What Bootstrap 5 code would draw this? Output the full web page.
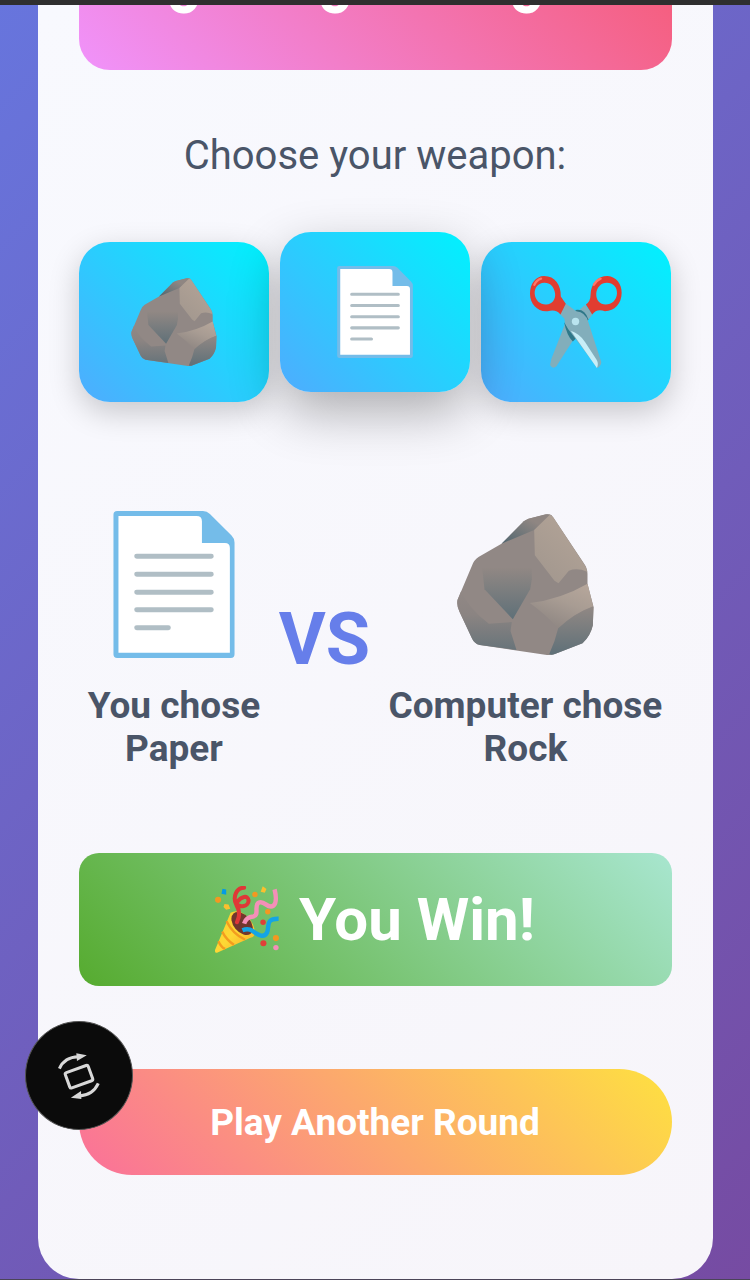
<!DOCTYPE html>
<html lang="en">
<head>
<meta charset="utf-8">
<meta name="viewport" content="width=device-width, initial-scale=1">
<title>Rock Paper Scissors</title>
<link rel="stylesheet" href="https://cdn.jsdelivr.net/npm/bootstrap@5.3.0/dist/css/bootstrap.min.css">
<style>
body { font-family: Roboto, "Liberation Sans", sans-serif; color: #4a5568; background: linear-gradient(135deg, #6775dd 0%, #764ba2 100%); min-height: 100vh; border-top: 5px solid #2f2f2f; border-bottom: 1px solid #4b4458; }
.game { margin: 0 5%; padding: 0 41px 104px; background: linear-gradient(135deg, #f8f9fe, #f7f5fa); border-radius: 0 0 41px 41px; }
.score { display: grid; grid-template-columns: 210fr 92fr 290fr; align-content: end; height: 65px; padding-bottom: 46px; overflow: hidden; border-radius: 0 0 31px 31px; background: linear-gradient(45deg, #f093fb, #f55f80); color: #fff; font-size: 64px; font-weight: 700; line-height: 64px; text-align: center; }
.prompt { font-size: 40px; line-height: 48px; font-weight: 400; margin: 62px 0; }
.weapons { display: grid; grid-template-columns: repeat(3, 1fr); gap: 11px; }
.weapon { height: 160px; border: 0; border-radius: 31px; background: linear-gradient(45deg, #4facfe, #00f2fe); box-shadow: 0 10px 31px rgba(0,0,0,.2); }
.weapon.chosen { transform: translateY(-10px); box-shadow: 0 20px 51px rgba(0,0,0,.3); z-index: 1; }
.duel { margin-top: 107px; font-size: 37px; line-height: 43px; font-weight: 700; }
.pick { height: 150px; margin-bottom: 25px; }
.versus { color: #667eea; font-size: 72px; line-height: 84px; }
.outcome { margin-top: 83px; padding: 31px 0; border-radius: 20px; background: linear-gradient(45deg, #56ab2f, #a8e6cf); color: #fff; font-size: 60px; line-height: 71px; font-weight: 700; gap: 19px; }
.again { margin-top: 83px; height: 106px; border: 0; border-radius: 53px; background: linear-gradient(45deg, #fa709a, #fee140); color: #fff; font-size: 37px; line-height: 43px; font-weight: 700; }
.rotate { left: 25px; bottom: 150px; width: 108px; height: 109px; border: 1px solid #555; background: #0b0b0b; z-index: 5; }
</style>
</head>
<body>
<svg width="0" height="0" class="position-absolute" aria-hidden="true">
  <defs>
    <linearGradient id="face" x1="0" y1="0" x2="0" y2="1"><stop offset="0" stop-color="#918884"/><stop offset="1" stop-color="#5f7078"/></linearGradient>
    <linearGradient id="side" x1="0" y1="0" x2="0" y2="1"><stop offset="0" stop-color="#918885"/><stop offset=".4" stop-color="#8b8482"/><stop offset="1" stop-color="#68747a"/></linearGradient>
    <linearGradient id="light" x1="1" y1="0" x2=".3" y2="1"><stop offset="0" stop-color="#b5a598"/><stop offset="1" stop-color="#a3988f"/></linearGradient>
    <linearGradient id="ledge" x1="1" y1="0" x2=".4" y2="1"><stop offset="0" stop-color="#b8a89c"/><stop offset=".5" stop-color="#a89c93"/><stop offset="1" stop-color="#8f8783"/></linearGradient>
    <linearGradient id="back" x1="1" y1="0" x2="0" y2="1"><stop offset=".3" stop-color="#8f8682"/><stop offset="1" stop-color="#506670"/></linearGradient>
    <linearGradient id="cone" x1="0" y1="0" x2="1" y2="1"><stop offset="0" stop-color="#ffca28"/><stop offset=".5" stop-color="#fdd835"/><stop offset="1" stop-color="#f9a825"/></linearGradient>
  </defs>
  <symbol id="rock" viewBox="40 44 410 423">
    <path fill="#918885" d="M173 133 240 66Q246 61 254 58L302 46Q318 42 327 52L420 192Q431 207 431 224L431 253 449 322 447 378Q440 410 416 432L335 463Q320 469 304 466L108 437Q92 433 85 418L47 337Q38 320 41 302L84 200Q90 182 104 173Z"/>
    <path fill="url(#back)" d="M173 133 240 66Q246 61 254 58L306 45Q318 44 325 49L271 92Z"/>
    <path fill="url(#side)" d="M52 275Q72 325 135 373L204 368 200 395 218 452 108 437Q92 433 85 418L47 337Q38 320 41 302Z"/>
    <path fill="url(#face)" d="M115 205 122 270 207 360 259 270 264 240 264 205Z"/>
    <path fill="url(#light)" d="M271 92 318 46Q324 47 329 55L418 190Q427 201 430 217Q400 204 375 214L344 252 332 244 273 168Z"/>
    <path fill="url(#ledge)" d="M258 311Q350 300 431 253L448 321Q390 342 343 387Q305 345 258 311Z"/>
    <path fill="url(#face)" d="M343 387Q390 342 449 322L447 378Q440 410 416 432L335 463Q325 468 316 465L332 425Z"/>
  </symbol>
  <symbol id="paper" viewBox="59 47 364 442">
    <path fill="#74bce9" d="M70 47H328Q340 47 349 56L414 121Q423 130 423 142V478Q423 489 412 489H70Q59 489 59 478V58Q59 47 70 47Z"/>
    <path fill="#fff" d="M74 62H309Q325 62 325 78V143H394Q409 143 409 158V473H74Z"/>
    <path fill="none" stroke="#b0bec5" stroke-width="15" stroke-linecap="round" d="M129 183H353M129 237H353M129 291H353M129 344H353M129 398H224"/>
  </symbol>
  <symbol id="scissors" viewBox="180 150 275 275">
    <path fill="#82aebb" d="M344 237 367 265 324 318 259 420Q248 430 240 416L244 397 286 290Z"/>
    <path fill="#2f7889" d="M315 252Q344 246 355 281L346 286 325 265ZM282 288 318 336 308 346Q290 328 282 288Z"/>
    <path fill="#82aebb" d="M287 232 318 255Q347 258 354 287L393 407Q393 418 382 425L302 319Q282 296 283 278L269 263Z"/>
    <path fill="#c8eef7" d="M302 314Q330 324 345 348L379 400Q386 412 380 425Z"/>
    <circle cx="316" cy="286" r="11" fill="#b9e4ef"/>
    <g fill="#e13d30" fill-rule="evenodd">
      <path d="M222 150C255 150 273 177 272 211L287 233 271 265Q259 248 233 255C204 258 180 235 180 203C180 174 197 150 222 150ZM222 170C205 171 193 184 194 203C196 224 211 236 229 235C246 234 257 220 255 202C252 181 239 169 222 170Z"/>
      <path d="M412 150C438 152 454 174 454 200C454 232 433 255 404 255Q379 246 366 265L347 235Q361 226 361 206C362 173 382 150 412 150ZM410 170C392 170 379 184 378 203C377 222 389 235 406 235C425 235 439 221 440 202C441 183 428 170 410 170Z"/>
    </g>
    <path fill="none" stroke="#ff7768" stroke-width="7" stroke-linecap="round" d="M193 176Q200 162 213 158M371 176Q380 162 391 158"/>
  </symbol>
  <symbol id="popper" viewBox="38 33 192 198">
    <path fill="url(#cone)" d="M84 112Q108 98 136 126Q158 150 155 177Q152 185 141 187L44 230Q37 232 38 222Z"/>
    <path fill="none" stroke="#f39c1f" stroke-width="7" d="M72 137Q90 174 127 192M59 168Q73 194 94 207M48 196Q56 214 68 219"/>
    <ellipse cx="118" cy="144" rx="25" ry="39" transform="rotate(-40 118 144)" fill="#71372e"/>
    <path fill="none" stroke="#df3737" stroke-width="12" stroke-linecap="round" d="M103 140Q116 113 102 91C88 65 102 38 124 38M99 83C110 100 139 93 137 75C134 59 116 64 104 80"/>
    <path fill="none" stroke="#f48fb8" stroke-width="13" d="M124 144Q130 124 151 123C171 120 151 89 168 82C184 74 194 103 211 91Q223 80 214 43"/>
    <path fill="none" stroke="#14a4e5" stroke-width="13" d="M119 164Q136 157 149 166C168 180 183 187 192 170C199 151 187 129 226 130"/>
    <g fill="#f39821"><circle cx="47" cy="74" r="9"/><circle cx="156" cy="58" r="8"/><circle cx="194" cy="109" r="8"/><circle cx="218" cy="187" r="9"/></g>
    <g fill="#fbc02d"><path d="m66 86 12 2 5 12-12 3-8-8Z"/><path d="m179 34 11 8-5 11-12-3Z"/></g>
    <path fill="#039be5" d="m60 41 11 2v16l-14-3Z"/>
    <circle cx="180" cy="140" r="8" fill="#e04038"/><circle cx="181" cy="202" r="9" fill="#e04038"/><circle cx="218" cy="215" r="8" fill="#f48fb8"/>
  </symbol>
</svg>
<main class="game">
  <section class="score" aria-label="Score"><span>0</span><span>0</span><span>0</span></section>
  <h1 class="prompt text-center">Choose your weapon:</h1>
  <div class="weapons">
    <button type="button" class="weapon d-flex align-items-center justify-content-center" aria-label="Rock"><svg width="86" height="88"><use href="#rock"/></svg></button>
    <button type="button" class="weapon chosen d-flex align-items-center justify-content-center" aria-label="Paper"><svg width="76" height="92"><use href="#paper"/></svg></button>
    <button type="button" class="weapon d-flex align-items-center justify-content-center" aria-label="Scissors"><svg width="92" height="92"><use href="#scissors"/></svg></button>
  </div>
  <section class="duel d-flex justify-content-around align-items-center text-center">
    <div><div class="pick d-flex align-items-center justify-content-center"><svg width="122" height="147"><use href="#paper"/></svg></div>You chose<br>Paper</div>
    <div class="versus">VS</div>
    <div><div class="pick d-flex align-items-center justify-content-center"><svg width="137" height="141"><use href="#rock"/></svg></div>Computer chose<br>Rock</div>
  </section>
  <div class="outcome d-flex align-items-center justify-content-center"><svg width="65" height="67"><use href="#popper"/></svg><span>You Win!</span></div>
  <button type="button" class="again d-block w-100">Play Another Round</button>
</main>
<button type="button" class="rotate position-fixed rounded-circle p-0 d-flex align-items-center justify-content-center" aria-label="Rotate screen">
  <svg width="42" height="46" viewBox="134 130 124 136" fill="none" stroke="#d8d8d8" stroke-width="9"><rect x="160" y="176" width="72" height="48" rx="5" transform="rotate(-20 196 200)"/><path d="M138 176Q153 142 194 141M253 220Q237 255 197 257"/><path fill="#d8d8d8" stroke="none" d="M188 131 219 137 190 154ZM202 242 172 262 203 266Z"/></svg>
</button>
<script src="https://cdn.jsdelivr.net/npm/bootstrap@5.3.0/dist/js/bootstrap.bundle.min.js"></script>
</body>
</html>
